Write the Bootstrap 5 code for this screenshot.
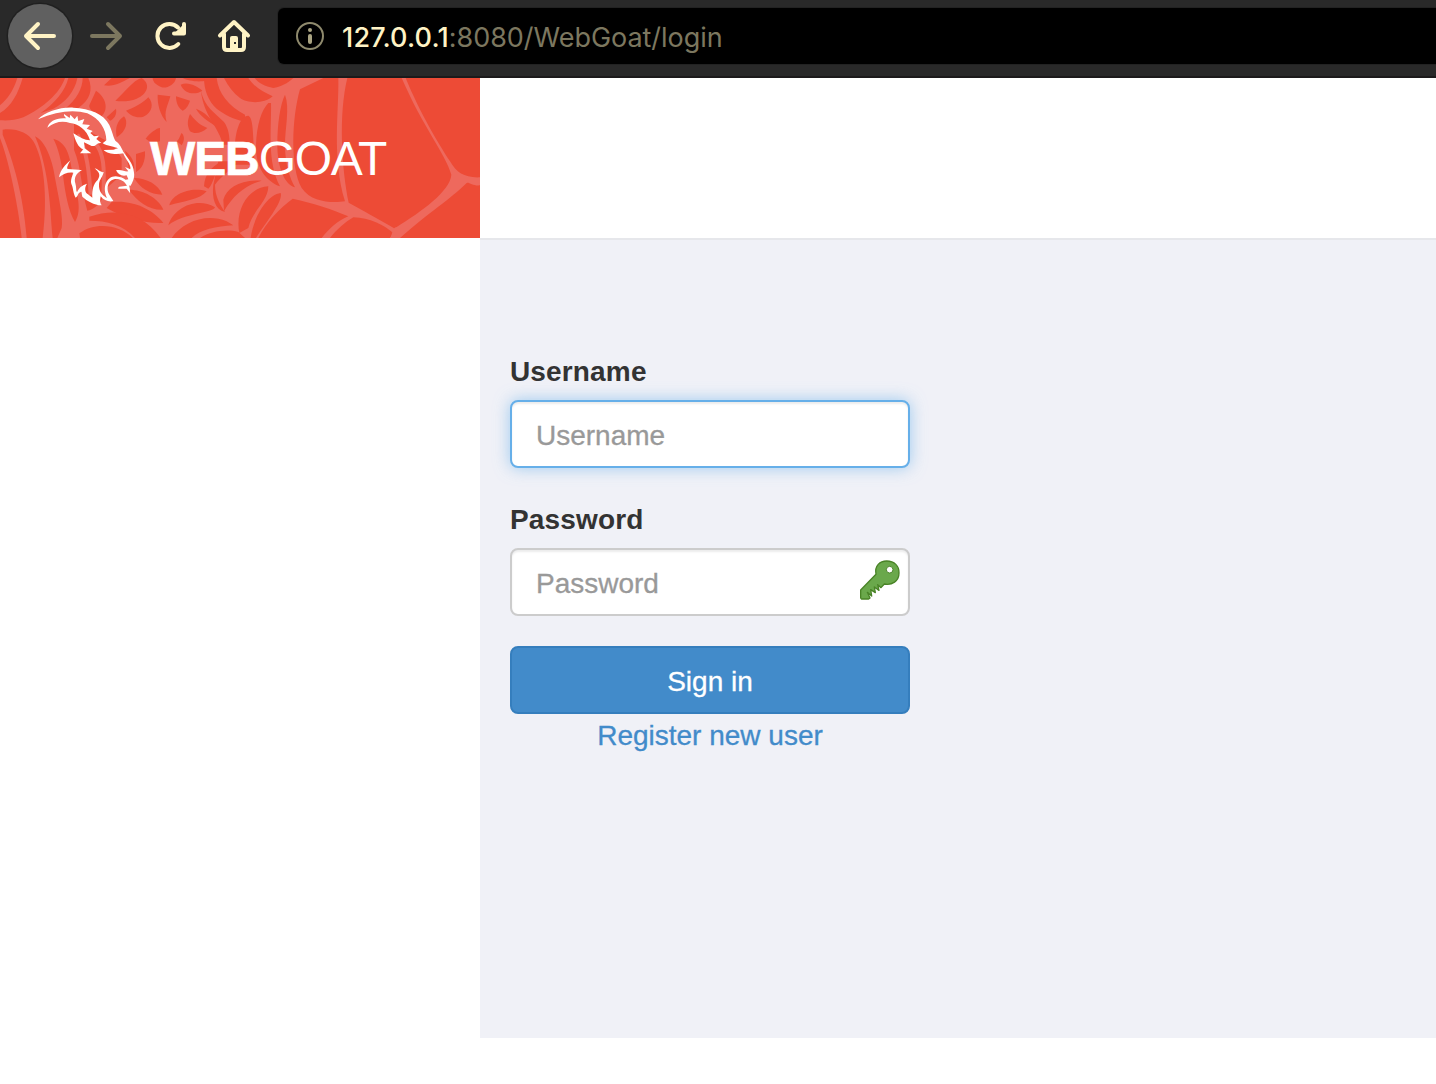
<!DOCTYPE html>
<html lang="en">
<head>
<meta charset="utf-8">
<title>Login Page</title>
<link rel="stylesheet" href="https://cdn.jsdelivr.net/npm/bootstrap@5.3.0/dist/css/bootstrap.min.css">
<style>
body{font-family:"Liberation Sans",Arial,sans-serif;font-size:28px;line-height:40px;color:#333;background:#fff;overflow:hidden}
.browser-bar{height:78px;background:#292929;border-bottom:2px solid #1c1a1b;padding:4px 0 8px 8px}
.tool-btn{width:64px;height:64px;flex:none}
.tool-btn svg{display:block}
.back-btn{background:#606060;border-radius:50%;box-shadow:0 0 0 1.5px #202020}
.address{height:56px;background:#000;border-radius:6px 0 0 6px;margin-left:14px;padding-left:18px;box-shadow:0 0 0 1px #222;font-family:Inter,Roboto,sans-serif;font-size:27px;color:#7c775f}
.address b{font-weight:500;color:#fff3c5;letter-spacing:.17px}
.address .url{margin-left:18px;padding-top:4px;letter-spacing:-.04px;white-space:nowrap}
.brand{width:480px;height:160px;background:#ed4b36;flex:none}
.brand svg{left:0;top:0}
.brand-name{font-size:48px;line-height:50px;color:#fff;padding:56px 0 0 150px;letter-spacing:-1.3px;white-space:nowrap}
.brand-name b{letter-spacing:-1.1px;-webkit-text-stroke:.6px #fff}
.top-line{height:160px}
.side{width:480px;flex:none}
.main-panel{height:800px;background:#f0f1f7;border-top:2px solid #e6e7eb;padding:110px 30px 0}
.login-form{width:400px}
.login-form label{font-weight:700;letter-spacing:.15px;margin-bottom:10px;padding-top:2px;height:40px}
.login-form .form-control{height:68px;border:2px solid #ccc;border-radius:8px;padding:4px 24px 0;font-size:28px;line-height:40px;box-shadow:inset 0 2px 2px rgba(0,0,0,.075)}
.login-form .form-control::placeholder{color:#999;opacity:1;-webkit-text-stroke:.3px #999}
.login-form .active-field{border-color:#66afe9;box-shadow:inset 0 2px 2px rgba(0,0,0,.075),0 0 16px rgba(102,175,233,.6)}
.field{margin-bottom:30px}
.btn-sign{height:68px;background:#428bca;border:2px solid #357ebd;border-radius:8px;color:#fff;font-size:28px;line-height:40px;padding:14px 0 10px;-webkit-text-stroke:.3px #fff}
.register{color:#428bca;height:40px;padding-top:2px;-webkit-text-stroke:.3px #428bca}
.key{right:9px;top:11px}
</style>
</head>
<body>
<nav class="browser-bar d-flex align-items-center">
  <div class="tool-btn back-btn"><svg width="64" height="64" fill="none" stroke="#fff3c5" stroke-width="4" stroke-linecap="round" stroke-linejoin="round"><path d="M46 32H18M30 20L18 32L30 44"/></svg></div>
  <div class="tool-btn"><svg width="64" height="64" fill="none" stroke="#7c775f" stroke-width="4" stroke-linecap="round" stroke-linejoin="round"><path d="M20 32H48M36 20L48 32L36 44"/></svg></div>
  <div class="tool-btn"><svg width="64" height="64" fill="none" stroke="#fff3c5" stroke-width="4" stroke-linecap="round" stroke-linejoin="round"><path d="M42.3 40A12 12 0 1 1 42 23.500"/><path d="M48 20V29.500H38Z" fill="#fff3c5" stroke="none"/><path d="M48 20V29.500H38"/></svg></div>
  <div class="tool-btn"><svg width="64" height="64" fill="none" stroke="#fff3c5" stroke-width="4" stroke-linecap="round" stroke-linejoin="round"><path d="M20 31.500L34 18L48 31.500"/><path d="M24 30V43Q24 46 27 46H41Q44 46 44 43V30"/><path d="M30 46V34Q30 32 32 32H36Q38 32 38 34V46Z" fill="#fff3c5" stroke="none"/><rect x="34" y="38" width="2" height="2" fill="#292929" stroke="none"/></svg></div>
  <div class="address d-flex align-items-center flex-grow-1">
    <svg width="28" height="28"><circle cx="14" cy="14" r="13" fill="none" stroke="#8f8a6d" stroke-width="2"/><circle cx="14" cy="8" r="2" fill="#aaa482"/><rect x="12" y="12" width="4" height="10" rx="2" fill="#aaa482"/></svg>
    <span class="url"><b>127.0.0.1</b>:8080/WebGoat/login</span>
  </div>
</nav>

<header class="d-flex">
  <div class="brand position-relative">
    <svg class="position-absolute" width="480" height="160" viewBox="0 0 1440 480">
      <rect width="1440" height="480" fill="#ee695d"/>
      <g fill="#ed4b36">
        <!-- outer threads, left -->
        <path d="M0 0H52C40 40 20 65 0 82Z"/>
        <path d="M68 0H195C180 45 130 90 70 118C45 128 20 128 0 127V105C35 85 55 45 68 0Z"/>
        <path d="M205 0H232C225 40 195 75 160 92L122 105C165 75 195 40 205 0Z"/>
        <path d="M248 0H265C280 35 270 65 235 90L195 92C230 65 248 30 248 0Z"/>
        <path d="M288 38C322 60 325 100 303 115C285 105 265 95 268 82Z"/>
        <path d="M0 180C20 230 50 350 65 480H0Z"/>
        <path d="M8 155C50 150 85 165 100 190C130 240 145 350 128 480H80C70 350 40 250 8 170Z"/>
        <path d="M105 175C140 190 160 260 165 300C178 370 190 420 185 450L172 480H158C150 400 150 280 105 175Z"/>
        <path d="M160 182C205 195 210 240 220 300C235 360 245 400 225 432C205 400 195 340 190 300C185 250 175 210 160 182Z"/>
        <path d="M222 120C260 150 300 180 330 190L365 240V290L320 330C310 370 285 395 262 398C245 340 245 270 222 215Z"/>
        <!-- centre cells -->
        <path d="M312 22C340 28 365 12 390 0H335Z"/>
        <path d="M346 68C370 48 400 5 425 0C455 20 440 50 410 62C390 70 365 72 346 68Z"/>
        <path d="M378 98C400 90 430 75 445 58C462 75 458 105 430 116C410 122 390 112 378 98Z"/>
        <path d="M458 0H528C525 20 500 32 485 28C470 22 458 12 458 0Z"/>
        <path d="M473 50L511 55C505 80 490 100 500 132C480 110 472 80 473 50Z"/>
        <path d="M528 55L570 68C565 85 555 95 548 98C535 90 528 75 528 55Z"/>
        <path d="M542 20C565 10 590 25 607 38C590 50 555 52 542 20Z"/>
        <path d="M548 0H632C620 15 570 12 548 0Z"/>
        <path d="M570 108C580 120 595 140 622 150C605 165 585 170 570 160C560 140 563 125 570 108Z"/>
        <path d="M588 92C610 100 635 120 645 143C625 130 600 115 588 92Z"/>
        <path d="M437 182C450 165 470 150 480 150V190L455 195Z"/>
        <path d="M372 115C385 130 380 160 350 178C345 150 350 130 372 115Z"/>
        <path d="M320 118L348 92C352 110 340 125 330 128Z"/>
        <path d="M375 218C395 235 405 250 402 280H388Z"/>
        <path d="M408 228L435 220C437 250 425 275 408 282Z"/>
        <path d="M530 190C540 182 540 170 545 165C555 175 553 190 545 202Z"/>
        <path d="M402 300C440 300 475 320 487 350C450 350 420 330 402 300Z"/>
        <path d="M387 335C430 335 475 360 490 395C450 398 410 370 387 335Z"/>
        <path d="M335 372C400 365 460 395 490 435C440 438 370 420 320 390Z"/>
        <path d="M268 416C350 388 430 405 482 480H405C370 440 320 428 268 428Z"/>
        <path d="M238 466C285 430 360 440 398 480H240Z"/>
        <path d="M508 382C515 350 570 325 620 340C600 365 550 370 508 382Z"/>
        <path d="M505 442C520 390 590 355 645 388C640 405 550 405 505 442Z"/>
        <path d="M515 480C550 430 620 405 680 430L700 442C650 445 600 455 575 480Z"/>
        <path d="M600 480C630 460 680 452 715 462L735 480Z"/>
        <path d="M612 325C615 290 630 270 665 250C645 280 640 320 625 332Z"/>
        <path d="M655 250H720C690 275 660 300 645 320C645 355 660 380 675 402C645 395 635 360 640 320Z"/>
        <!-- threads right of the centre -->
        <path d="M612 0H650C655 45 685 85 735 110V130C700 125 675 110 650 92C625 70 612 35 612 0Z"/>
        <path d="M603 38C612 85 645 105 672 132C685 150 690 175 688 200H668C660 150 610 115 603 38Z"/>
        <path d="M672 0H745C765 30 790 42 818 55C790 80 740 75 720 60C700 45 685 25 672 0Z"/>
        <path d="M764 0H880C865 15 840 28 820 30C795 25 775 15 764 0Z"/>
        <path d="M705 260C698 160 722 112 745 113C762 120 758 180 765 260Z"/>
        <path d="M805 75H813C815 150 800 250 840 325C800 310 765 270 768 200C770 140 785 95 805 75Z"/>
        <path d="M855 50C870 90 855 150 855 200C855 260 870 300 885 328C855 320 832 270 832 200C832 140 840 80 855 50Z"/>
        <path d="M900 34L970 0H1015C1017 100 995 240 1035 370C1000 375 935 375 905 330C870 270 875 120 900 34Z"/>
        <path d="M1042 0H1440V480H1190L1190 455C1130 420 1090 398 1046 374C1025 270 1015 110 1042 0Z"/>
        <path d="M878 362C940 375 1000 395 1045 415C1010 430 985 455 965 480H775C800 430 840 390 878 362Z"/>
        <path d="M1060 418C1110 420 1150 440 1180 465L1170 480H990C1010 455 1035 432 1060 418Z"/>
        <path d="M752 480C760 420 800 350 842 345C850 370 800 430 768 480Z"/>
        <path d="M718 465C705 400 740 330 805 325C805 370 755 400 745 450Z"/>
        <path d="M670 365C680 330 720 305 785 308C740 320 700 350 672 400Z"/>
      </g>
      <path d="M1205 0H1217C1260 105 1315 195 1350 250C1370 285 1395 300 1440 298V322C1420 325 1405 310 1400 315C1350 365 1290 400 1200 480H1170C1180 465 1175 450 1190 447C1265 400 1350 340 1354 290C1335 225 1270 150 1205 0Z" fill="#ee695d"/>
      <path d="M232 170C262 215 268 290 272 350M285 195C312 225 314 270 310 350M222 120C250 150 300 170 345 195" fill="none" stroke="#ee695d" stroke-width="12"/>
      <g transform="translate(90 66)" fill="#fff">
        <path d="M24 58C45 36 90 21 130 23C180 25 222 42 238 75C247 95 250 112 256 122C268 130 276 143 281 160C258 165 232 162 221 150L250 149L264 145C250 138 232 139 218 130L229 121C229 88 208 55 172 40C130 28 80 34 24 58Z"/>
        <path d="M52 83C57 64 80 52 108 55C106 50 100 47 102 42L119 54L121 44L134 58L142 47L145 63L163 57L157 73L180 75L170 86L188 93L181 99L192 109L207 107L199 117L214 129C195 128 203 140 185 138L162 127L164 145L184 160H150L160 148C144 143 136 122 130 100C148 111 164 121 180 121C170 88 145 72 120 69C97 61 75 65 52 83Z"/>
        <path d="M87 232C92 207 106 195 121 181C112 197 110 205 113 207C127 209 143 208 156 211C136 220 132 237 136 250C140 263 137 271 141 277C147 263 154 257 171 251C163 263 164 277 174 283L187 293C186 270 190 251 203 240C213 224 207 217 194 205C204 207 213 219 221 216C219 229 209 237 207 252C205 276 220 288 231 294C216 263 229 229 257 229C283 231 302 245 300 279L290 266L271 266C261 267 264 263 268 260L291 257C282 240 264 234 252 238C230 243 229 272 238 284L250 303C239 307 221 302 212 289C209 302 210 309 215 316C192 315 171 303 157 290C154 278 156 274 152 276C143 278 145 289 137 293C129 279 130 263 125 254C119 240 129 224 130 218C112 216 101 222 87 232Z"/>
        <path d="M275 148C290 173 311 190 312 218C315 234 306 250 301 258C292 256 286 247 280 241L295 238L290 226C276 230 264 223 258 211C275 207 284 216 295 214L285 201L301 208C305 193 284 178 275 148Z"/>
      </g>
    </svg>
    <div class="brand-name position-relative"><b>WEB</b>GOAT</div>
  </div>
  <div class="top-line flex-grow-1"></div>
</header>

<div class="d-flex">
  <aside class="side"></aside>
  <main class="main-panel flex-grow-1">
    <form class="login-form">
      <div class="field">
        <label class="d-block" for="username">Username</label>
        <input class="form-control active-field" id="username" type="text" placeholder="Username">
      </div>
      <div class="field">
        <label class="d-block" for="password">Password</label>
        <div class="position-relative">
          <input class="form-control" id="password" type="password" placeholder="Password">
          <svg class="key position-absolute" width="44" height="44" viewBox="0 0 132 132"><path d="M11 117V93L57 46C52 20 69 6 89 6C112 6 127 21 126 42C126 66 105 80 82 75L72 86L62 77L66 94L52 84L55 101L41 92L44 111L31 100L39 117L35 120H13Z" fill="#6aa84b" stroke="#498326" stroke-width="4" stroke-linejoin="round"/><circle cx="98" cy="32" r="10" fill="#fff" stroke="#498326" stroke-width="3"/></svg>
        </div>
      </div>
      <button class="btn btn-sign w-100 d-block" type="button">Sign in</button>
      <div class="register text-center">Register new user</div>
    </form>
  </main>
</div>
<script src="https://cdn.jsdelivr.net/npm/bootstrap@5.3.0/dist/js/bootstrap.bundle.min.js"></script>
</body>
</html>
